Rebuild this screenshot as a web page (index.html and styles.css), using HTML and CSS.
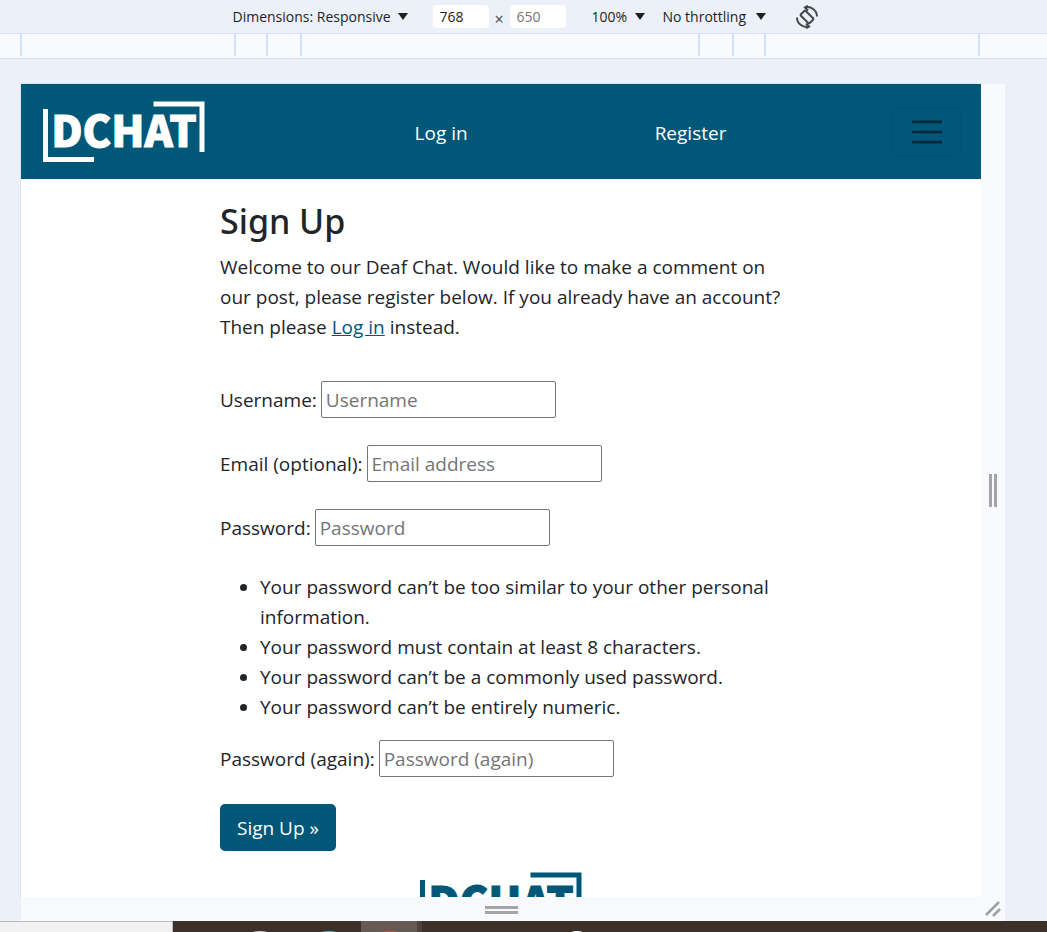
FILE: index.html
```html
<!DOCTYPE html>
<html lang="en">
<head>
<meta charset="utf-8">
<meta name="viewport" content="width=device-width, initial-scale=1">
<title>Sign Up</title>
<link rel="stylesheet" href="styles.css">
</head>
<body>
<header class="toolbar">
  <span class="picker picker-device"><select aria-label="Device"><option>Dimensions: Responsive</option></select></span>
  <div class="size">
    <input type="text" value="768" aria-label="Width">
    <span class="times">×</span>
    <input type="text" class="muted" value="650" aria-label="Height">
  </div>
  <span class="picker picker-zoom"><select aria-label="Zoom"><option>100%</option></select></span>
  <span class="picker picker-net"><select aria-label="Throttling"><option>No throttling</option></select></span>
  <button class="rotate" type="button" aria-label="Rotate">
    <svg width="24" height="24" viewBox="0 0 24 24" fill="none" stroke="#474747" stroke-width="2">
      <rect x="8.600" y="5.800" width="6.800" height="12.400" rx="1" transform="rotate(-45 12 12)"/>
      <path d="M10 2.300C16.500 1 22 5.500 22 11.500M14 21.700C7.500 23 2 18.500 2 12.500"/>
      <path d="M13 .8 10 2.400 13 5.500M11 23.200 14 21.600 11 18.500"/>
    </svg>
  </button>
</header>
<div class="ruler"><i></i><i></i><i></i><i></i><i></i><i></i><i></i></div>
<div class="stage">
  <div class="device">
    <div class="screen">
      <nav class="navbar">
        <a class="brand" href="#" aria-label="DCHAT">
          <svg class="logo" width="164" height="64" viewBox="0 0 164 64">
            <path d="M3.500 9V59.500H52M111.500 4H160V52" fill="none" stroke="currentColor" stroke-width="5"/>
            <text x="82" y="47" text-anchor="middle">DCHAT</text>
          </svg>
        </a>
        <ul class="links">
          <li><a href="#">Log in</a></li>
          <li><a href="#">Register</a></li>
        </ul>
        <button class="toggler" type="button" aria-label="Menu">
          <svg width="38" height="38" viewBox="0 0 30 30" fill="none" stroke="currentColor" stroke-width="2" stroke-linecap="round"><path d="M4 7h22M4 15h22M4 23h22"/></svg>
        </button>
      </nav>
      <main class="content">
        <h1>Sign Up</h1>
        <p class="intro">Welcome to our Deaf Chat. Would like to make a comment on our post, please register below. If you already have an account? Then please <a href="#">Log in</a> instead.</p>
        <form>
          <div class="field"><label for="user">Username:</label><input id="user" type="text" placeholder="Username"></div>
          <div class="field"><label for="mail">Email (optional):</label><input id="mail" type="email" placeholder="Email address"></div>
          <div class="field"><label for="pass">Password:</label><input id="pass" type="password" placeholder="Password"></div>
          <ul class="hints">
            <li>Your password can’t be too similar to your other personal information.</li>
            <li>Your password must contain at least 8 characters.</li>
            <li>Your password can’t be a commonly used password.</li>
            <li>Your password can’t be entirely numeric.</li>
          </ul>
          <div class="field"><label for="again">Password (again):</label><input id="again" type="password" placeholder="Password (again)"></div>
          <button class="submit" type="submit">Sign Up »</button>
        </form>
      </main>
      <footer class="footer">
        <svg class="logo" width="164" height="64" viewBox="0 0 164 64" role="img" aria-label="DCHAT">
          <path d="M3.500 9V59.500H52M111.500 4H160V52" fill="none" stroke="currentColor" stroke-width="5"/>
          <text x="82" y="47" text-anchor="middle">DCHAT</text>
        </svg>
      </footer>
    </div>
    <div class="grip grip-side"><span></span></div>
    <div class="grip grip-bottom"><span></span></div>
    <div class="grip grip-corner">
      <svg width="16" height="16" viewBox="0 0 16 16" stroke="#a0a0a0" stroke-width="2.500" fill="none"><path d="M1 14 14 1M8 15 15 8"/></svg>
    </div>
  </div>
</div>
<div class="taskbar">
  <div class="search"></div>
  <svg class="apps" width="100%" height="11">
    <rect x="188" width="56" height="11" fill="#665a54"/>
    <rect x="244" width="5" height="11" fill="#4d423c"/>
    <ellipse cx="87" cy="12" rx="8" ry="2" fill="#d8d4d0"/>
    <ellipse cx="156" cy="12" rx="8" ry="2" fill="#45c0cb"/>
    <ellipse cx="217" cy="12" rx="8" ry="2" fill="#d94b3a"/>
    <ellipse cx="404" cy="13" rx="8" ry="3" fill="#ffffff"/>
  </svg>
</div>
</body>
</html>
```
FILE: styles.css
```css
* { box-sizing: border-box; }

body {
  display: flex;
  flex-direction: column;
  height: 100vh;
  margin: 0;
  overflow: hidden;
  background: #ebf0f9;
  color: #212529;
  font-family: "Open Sans", "Noto Sans", sans-serif;
  font-size: 19px;
  line-height: 30px;
}

input, select, button { font: inherit; color: inherit; }

.toolbar {
  flex: none;
  display: flex;
  align-items: center;
  justify-content: center;
  height: 34px;
  padding-left: 4px;
  border-bottom: 1px solid #d3e1fb;
  color: #1f1f1f;
  font-size: 14px;
  line-height: 20px;
}
.picker { display: flex; align-items: center; }
.picker select {
  appearance: none;
  width: 100%;
  padding: 0;
  border: 0;
  background: transparent;
}
.picker::after {
  content: "";
  flex: none;
  border: 5px solid transparent;
  border-top: 7px solid #1f1f1f;
  border-bottom: 0;
}
.picker-device { width: 175px; margin-right: 25px; }
.picker-zoom { width: 53px; margin-right: 18px; }
.picker-net { width: 103px; margin-right: 29px; }
.size { display: flex; align-items: center; margin-right: 26px; }
.size input {
  width: 56px;
  height: 23px;
  padding: 0 7px;
  border: 0;
  border-radius: 4px;
  background: #fff;
}
.size .muted { color: #757575; }
.times { width: 21px; padding-top: 4px; text-align: center; color: #474747; font-size: 16px; }
.rotate { display: flex; padding: 0; border: 0; background: transparent; }

.ruler {
  flex: none;
  display: grid;
  grid-template-columns: 214fr 32fr 34fr 398fr 34fr 32fr 216fr;
  height: 25px;
  padding: 0 67px 2px 20px;
  border-bottom: 1px solid #d3e1fb;
  background: #f8fafe;
}
.ruler i { border-left: 2px solid #d3e1fb; }
.ruler i:last-child { border-right: 2px solid #d3e1fb; }

.stage {
  flex: 1;
  min-height: 0;
  padding: 25px 42px 0 21px;
}
.device {
  display: grid;
  grid-template-columns: 1fr 24px;
  grid-template-rows: minmax(0, 1fr) 24px;
  height: 100%;
  background: #f8fafe;
}
.screen {
  overflow: hidden;
  background: #fff;
  box-shadow: 0 0 0 1px #dfe4ec;
}
.grip { display: flex; align-items: center; justify-content: center; background: #f8fafe; z-index: 1; }
.grip-side span { width: 8px; height: 33px; margin-right: 1px; border: solid #a5a5a5; border-width: 0 3px; }
.grip-bottom span { width: 33px; height: 8px; margin-top: 2px; border: solid #a5a5a5; border-width: 3px 0; }

.navbar {
  display: flex;
  align-items: center;
  height: 95px;
  padding: 0 20px 0 21px;
  background: #005777;
  color: #fff;
}
.navbar a { color: inherit; text-decoration: none; }
.brand { display: flex; }
.logo { display: block; }
.logo text {
  fill: currentColor;
  stroke: currentColor;
  stroke-width: 1px;
  font-family: "Noto Sans CJK JP", Lato, sans-serif;
  font-size: 43px;
  font-weight: 900;
}
.links {
  flex: 1;
  display: flex;
  justify-content: center;
  gap: 187px;
  margin: 0;
  padding: 3px 0 0 43px;
  list-style: none;
}
.toggler {
  display: flex;
  align-items: center;
  justify-content: center;
  width: 69px;
  height: 49px;
  padding: 0;
  border: 1px solid #00506e;
  border-radius: 5px;
  background: transparent;
  color: #00283a;
}

.content { width: 562px; max-width: 100%; margin: 0 auto; padding-top: 20px; }
h1 { margin: 0 0 10px; padding-top: 1px; font-family: "Noto Sans", "Open Sans", sans-serif; font-size: 34px; font-weight: 500; line-height: 42px; }
.intro { margin: 0 0 39px; }
.intro a { color: #005777; }
.field { display: flex; align-items: center; gap: 4px; margin-bottom: 27px; }
.field input {
  width: 235px;
  height: 37px;
  padding: 1px 4px;
  border: 1px solid #767676;
  border-radius: 2px;
  background: #fff;
}
.field input::placeholder { color: #757575; opacity: 1; }
.hints { margin: -1px 0 18px; padding-left: 40px; }
.submit {
  height: 47px;
  padding: 0 17px;
  border: 0;
  border-radius: 5px;
  background: #005777;
  color: #fff;
}
.footer { display: flex; justify-content: center; padding-top: 20px; color: #005777; }

.taskbar { flex: none; display: flex; height: 11px; background: #3d3028; }
.search { flex: none; width: 173px; border: solid #bababa; border-width: 1px 1px 0 0; background: #f1f1f1; }
.apps { flex: 1; min-width: 0; }
```
